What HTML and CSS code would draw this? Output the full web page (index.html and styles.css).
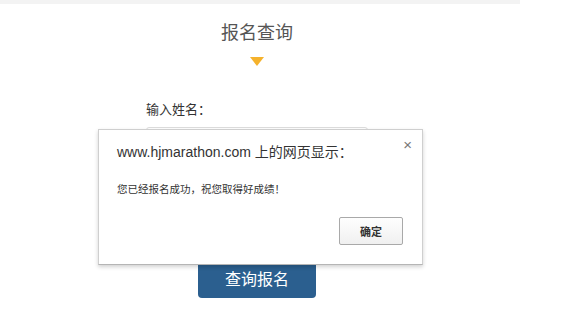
FILE: index.html
```html
<!DOCTYPE html>
<html lang="zh-CN">
<head>
    <meta charset="UTF-8">
    <meta name="viewport" content="width=device-width, initial-scale=1.0">
    <title>报名查询</title>
    <link rel="stylesheet" href="styles.css">
</head>
<body>
    <div class="top-bar"></div>

    <main class="query">
        <h1 class="query-title">报名查询</h1>
        <div class="query-arrow"></div>

        <form class="query-form">
            <label class="field-label" for="name">输入姓名：</label>
            <input class="field-input" id="name" type="text">
            <button class="query-btn" type="button">查询报名</button>
        </form>
    </main>

    <!-- 浏览器弹窗 -->
    <div class="alert">
        <span class="alert-close">&times;</span>
        <p class="alert-title">www.hjmarathon.com 上的网页显示：</p>
        <p class="alert-msg">您已经报名成功，祝您取得好成绩！</p>
        <div class="alert-actions">
            <button class="alert-btn" type="button">确定</button>
        </div>
    </div>
</body>
</html>
```

FILE: styles.css
```css
* {
    margin: 0;
    padding: 0;
    box-sizing: border-box;
    font-family: 'Liberation Sans', 'Noto Sans CJK SC', sans-serif;
}

body {
    background: #fff;
    position: relative;
    height: 334px;
    overflow: hidden;
}

.top-bar {
    width: 520px;
    height: 4px;
    background: #f3f3f3;
}

.query {
    width: 514px;
    text-align: center;
}

.query-title {
    margin-top: 17px;
    font-size: 18px;
    line-height: 24px;
    font-weight: normal;
    color: #555;
}

.query-arrow {
    width: 0;
    height: 0;
    margin: 12px auto 0;
    border-left: 7px solid transparent;
    border-right: 7px solid transparent;
    border-top: 9px solid #f5b22c;
}

.query-form {
    margin: 35px 0 0 146px;
    width: 222px;
    text-align: left;
}

.field-label {
    display: block;
    font-family: 'Liberation Sans', 'Noto Sans CJK TC', sans-serif;
    font-size: 13px;
    line-height: 18px;
    color: #333;
}

.field-input {
    display: block;
    margin-top: 8px;
    width: 222px;
    height: 32px;
    border: 1px solid #ddd;
    border-radius: 3px;
}

.query-btn {
    display: block;
    margin: 99px 0 0 52px;
    width: 118px;
    height: 40px;
    border: none;
    border-radius: 4px;
    background: #2b5f8f;
    color: #fff;
    font-size: 16px;
}

/* 弹窗 */
.alert {
    position: absolute;
    left: 98px;
    top: 129px;
    width: 325px;
    height: 136px;
    padding: 12px 19px 0 18px;
    background: #fff;
    border: 1px solid #cfcfcf;
    border-bottom-color: #b5b5b5;
    box-shadow: 0 2px 4px rgba(0,0,0,0.18);
}

.alert-close {
    position: absolute;
    right: 10px;
    top: 6px;
    font-size: 15px;
    color: #777;
}

.alert-title {
    font-family: 'Liberation Sans', 'Noto Sans CJK TC', sans-serif;
    font-size: 14px;
    line-height: 20px;
    color: #333;
}

.alert-msg {
    margin-top: 19px;
    font-family: 'Liberation Sans', 'Noto Sans CJK TC', sans-serif;
    font-size: 10.5px;
    line-height: 16px;
    color: #333;
}

.alert-actions {
    display: flex;
    justify-content: flex-end;
    margin-top: 20px;
}

.alert-btn {
    width: 64px;
    height: 28px;
    border: 1px solid #a9a9a9;
    border-radius: 2px;
    background: linear-gradient(#fefefe, #f0f0f0);
    font-size: 11px;
    font-weight: bold;
    color: #333;
}
```
